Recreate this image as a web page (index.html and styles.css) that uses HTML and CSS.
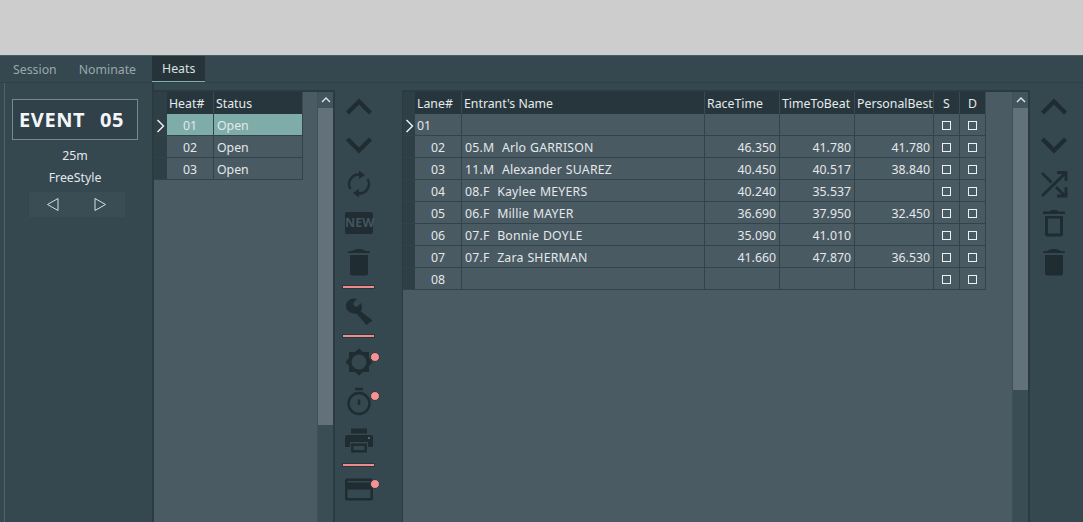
FILE: index.html
```html
<!DOCTYPE html>
<html lang="en">
<head>
    <meta charset="UTF-8">
    <title>Heats</title>
    <link rel="stylesheet" href="styles.css">
</head>
<body>
    <div class="titlebar"></div>
    <div class="window">
        <div class="tabs">
            <div class="tab">Session</div>
            <div class="tab">Nominate</div>
            <div class="tab active">Heats</div>
        </div>
        <div class="content">
            <!-- event selector -->
            <div class="event-panel">
                <div class="event-box"><span>EVENT</span><span>05</span></div>
                <div class="event-line first">25m</div>
                <div class="event-line">FreeStyle</div>
                <div class="event-nav">
                    <svg width="13" height="15" viewBox="0 0 13 15"><path d="M12 1.5v12L1.5 7.5z" class="tri"/></svg>
                    <svg width="13" height="15" viewBox="0 0 13 15"><path d="M1 1.5v12L11.5 7.5z" class="tri"/></svg>
                </div>
            </div>

            <!-- heats grid -->
            <div class="heat-panel">
                <div class="grid-area">
                    <table class="grid heat-grid">
                        <tr><th class="gutter"></th><th class="w-heat">Heat#</th><th class="w-status">Status</th></tr>
                        <tr class="selected"><td class="gutter"><svg class="mark" width="9" height="14" viewBox="0 0 9 14"><path d="M1.5 1l6 6-6 6"/></svg></td><td class="center">01</td><td>Open</td></tr>
                        <tr><td class="gutter"></td><td class="center">02</td><td>Open</td></tr>
                        <tr><td class="gutter"></td><td class="center">03</td><td>Open</td></tr>
                    </table>
                </div>
                <div class="scrollbar heat-scroll">
                    <div class="scroll-up"><svg width="10" height="6" viewBox="0 0 10 6"><path d="M1 5l4-4 4 4"/></svg></div>
                    <div class="scroll-thumb"></div>
                </div>
            </div>

            <!-- heat tools -->
            <div class="toolbar">
                <div class="slot"><svg width="30" height="30" viewBox="0 0 30 30"><path class="line" d="M3.5 22L15 10.5 26.5 22"/></svg></div>
                <div class="slot"><svg width="30" height="30" viewBox="0 0 30 30"><path class="line" d="M3.5 9L15 20.5 26.5 9"/></svg></div>
                <div class="slot faded"><svg width="30" height="30" viewBox="0 0 30 30"><path class="thin" d="M6.5 20a9.6 9.6 0 0 1 9-14.5M23.5 10a9.6 9.6 0 0 1-9 14.5"/><path class="fill" d="M15 1.5l6 4.5-6 4zM15 28.5l-6-4.5 6-4z"/></svg></div>
                <div class="slot faded"><div class="new-ico">NEW</div></div>
                <div class="slot"><svg width="30" height="30" viewBox="0 0 30 30"><path class="fill" d="M4 4.5q5-.5 6-1.5q5-2 10 0q1 1 6 1.5v1.5H4zM6 8h18v18q0 2.5-2.5 2.5h-13Q6 28.5 6 26z"/></svg></div>
                <div class="divider"></div>
                <div class="slot short"><svg width="30" height="30" viewBox="0 0 30 30"><path class="fill" d="M2 9C2 5 5 2 10 1.5L13 2 9 6l1 3 3 1 4-4 1 4c0 1.5-.5 3-1.5 4l12 9.500-6 4.500-10-11.500C8 17.500 2 14 2 9z"/></svg></div>
                <div class="divider"></div>
                <div class="slot">
                    <svg width="30" height="30" viewBox="0 0 30 30"><path class="fill" fill-rule="evenodd" d="M15 1.5l4 3.5h6v6l3.5 4-3.5 4v6h-6l-4 3.5-4-3.5H5v-6l-3.5-4L5 11V5h6zM15 7.5a7.5 7.5 0 1 0 0 15 7.5 7.5 0 0 0 0-15z"/></svg>
                    <span class="dot"></span>
                </div>
                <div class="slot">
                    <svg width="30" height="30" viewBox="0 0 30 30"><circle class="thin" cx="15" cy="17.5" r="10.5"/><path class="thin" d="M11 3h8M15 13.5v5.5"/></svg>
                    <span class="dot"></span>
                </div>
                <div class="slot"><svg width="30" height="30" viewBox="0 0 30 30"><path class="fill" fill-rule="evenodd" d="M7 3.5h16v5H7zM3 10h24q2 0 2 2v10h-5v-5H6v5H1V12q0-2 2-2zM7 18.5h16v9H7zm2.5 2.5v4h11v-4z"/><path class="light" d="M24 12h2v2h-2z"/></svg></div>
                <div class="divider"></div>
                <div class="slot short">
                    <svg width="30" height="30" viewBox="0 0 30 30"><path class="fill" fill-rule="evenodd" d="M3 3.5h24q2 0 2 2v18q0 2-2 2H3q-2 0-2-2v-18q0-2 2-2zm.5 2.5v1.500h23V6zm0 8.500V23h23v-8.500z"/></svg>
                    <span class="dot card-dot"></span>
                </div>
            </div>

            <!-- lanes grid -->
            <div class="lane-panel">
                <div class="grid-area">
                    <table class="grid lane-grid">
                        <tr>
                            <th class="gutter"></th>
                            <th class="w-lane">Lane#</th>
                            <th class="w-name">Entrant's Name</th>
                            <th class="w-time">RaceTime</th>
                            <th class="w-time">TimeToBeat</th>
                            <th class="w-best">PersonalBest</th>
                            <th class="w-check center">S</th>
                            <th class="w-check center">D</th>
                        </tr>
                        <tr>
                            <td class="gutter"><svg class="mark" width="9" height="14" viewBox="0 0 9 14"><path d="M1.5 1l6 6-6 6"/></svg></td>
                            <td class="tight">01</td><td></td><td></td><td></td><td></td>
                            <td class="center"><span class="check"></span></td><td class="center"><span class="check"></span></td>
                        </tr>
                        <tr>
                            <td class="gutter"></td><td class="center">02</td><td class="name">05.M&nbsp; Arlo GARRISON</td>
                            <td class="num">46.350</td><td class="num">41.780</td><td class="num">41.780</td>
                            <td class="center"><span class="check"></span></td><td class="center"><span class="check"></span></td>
                        </tr>
                        <tr>
                            <td class="gutter"></td><td class="center">03</td><td class="name">11.M&nbsp; Alexander SUAREZ</td>
                            <td class="num">40.450</td><td class="num">40.517</td><td class="num">38.840</td>
                            <td class="center"><span class="check"></span></td><td class="center"><span class="check"></span></td>
                        </tr>
                        <tr>
                            <td class="gutter"></td><td class="center">04</td><td class="name">08.F&nbsp; Kaylee MEYERS</td>
                            <td class="num">40.240</td><td class="num">35.537</td><td class="num"></td>
                            <td class="center"><span class="check"></span></td><td class="center"><span class="check"></span></td>
                        </tr>
                        <tr>
                            <td class="gutter"></td><td class="center">05</td><td class="name">06.F&nbsp; Millie MAYER</td>
                            <td class="num">36.690</td><td class="num">37.950</td><td class="num">32.450</td>
                            <td class="center"><span class="check"></span></td><td class="center"><span class="check"></span></td>
                        </tr>
                        <tr>
                            <td class="gutter"></td><td class="center">06</td><td class="name">07.F&nbsp; Bonnie DOYLE</td>
                            <td class="num">35.090</td><td class="num">41.010</td><td class="num"></td>
                            <td class="center"><span class="check"></span></td><td class="center"><span class="check"></span></td>
                        </tr>
                        <tr>
                            <td class="gutter"></td><td class="center">07</td><td class="name">07.F&nbsp; Zara SHERMAN</td>
                            <td class="num">41.660</td><td class="num">47.870</td><td class="num">36.530</td>
                            <td class="center"><span class="check"></span></td><td class="center"><span class="check"></span></td>
                        </tr>
                        <tr>
                            <td class="gutter"></td><td class="center">08</td><td></td><td></td><td></td><td></td>
                            <td class="center"><span class="check"></span></td><td class="center"><span class="check"></span></td>
                        </tr>
                    </table>
                </div>
                <div class="scrollbar lane-scroll">
                    <div class="scroll-up"><svg width="10" height="6" viewBox="0 0 10 6"><path d="M1 5l4-4 4 4"/></svg></div>
                    <div class="scroll-thumb"></div>
                </div>
            </div>

            <!-- lane tools -->
            <div class="toolbar right">
                <div class="slot"><svg width="30" height="30" viewBox="0 0 30 30"><path class="line" d="M3.5 22L15 10.5 26.5 22"/></svg></div>
                <div class="slot"><svg width="30" height="30" viewBox="0 0 30 30"><path class="line" d="M3.5 9L15 20.5 26.5 9"/></svg></div>
                <div class="slot"><svg width="30" height="30" viewBox="0 0 30 30"><path class="thin wide" d="M3 4l9.5 9.5M17 18l9 9M3 27L27 3.5M18 3.5h9v8.5M27 18v9h-9"/></svg></div>
                <div class="slot"><svg width="30" height="30" viewBox="0 0 30 30"><path class="fill" fill-rule="evenodd" d="M4 3.5h7l1-1.5h6l1 1.5h7V6H4zM6 8h18v18q0 2.5-2.5 2.5h-13Q6 28.5 6 26zm3 2.5V25.5h12V10.5z"/></svg></div>
                <div class="slot"><svg width="30" height="30" viewBox="0 0 30 30"><path class="fill" d="M4 4.5q5-.5 6-1.5q5-2 10 0q1 1 6 1.5v1.5H4zM6 8h18v18q0 2.5-2.5 2.5h-13Q6 28.5 6 26z"/></svg></div>
            </div>
        </div>
    </div>
</body>
</html>
```

FILE: styles.css
```css
* {
    margin: 0;
    padding: 0;
    box-sizing: border-box;
}

html, body {
    height: 100%;
    overflow: hidden;
}

body {
    display: flex;
    flex-direction: column;
    background-color: #cdcdcd;
    font-family: "Noto Sans", sans-serif;
    font-size: 13px;
    color: #e4e8ea;
}

.titlebar {
    height: 55px;
    flex: none;
}

.window {
    flex: 1;
    display: flex;
    flex-direction: column;
    min-height: 0;
    background-color: #35474f;
    border-top: 1px solid #4a5b63;
}

/* tabs */
.tabs {
    display: flex;
    height: 27px;
    flex: none;
    padding-left: 4px;
    border-bottom: 1px solid #2f4048;
    background-color: #35474f;
}

.tab {
    padding: 0 9px;
    margin-right: 4px;
    line-height: 27px;
    font-size: 12.3px;
    color: #9aa7ad;
}

.tab.active {
    background-color: #263439;
    color: #d9e0e3;
    height: 26px;
    line-height: 25px;
    padding: 0 10px;
    margin-left: 3px;
    border-bottom: 1px solid #7fb0ab;
}

.content {
    flex: 1;
    display: flex;
    min-height: 0;
    padding-left: 4px;
    background: linear-gradient(to right, #35474f 4px, #4f626a 4px, #4f626a 5px, transparent 5px);
}

/* event panel */
.event-panel {
    width: 150px;
    flex: none;
    padding: 16px 0 0 8px;
    border-right: 2px solid #2b3b42;
}

.event-box {
    display: flex;
    justify-content: space-between;
    width: 126px;
    height: 41px;
    padding: 0 13px 0 6px;
    border: 1px solid #7a888e;
    background-color: #30414a;
    line-height: 40px;
    font-size: 20px;
    font-weight: 700;
    color: #f4f6f7;
    letter-spacing: 0.6px;
}

.event-line {
    width: 126px;
    height: 22px;
    line-height: 22px;
    text-align: center;
    font-size: 12.3px;
}

.event-line.first {
    margin-top: 5px;
}

.event-nav {
    display: flex;
    gap: 35px;
    align-items: center;
    width: 96px;
    height: 25px;
    margin: 3px 0 0 17px;
    padding-left: 17px;
    background-color: #3a4c54;
}

.tri {
    fill: none;
    stroke: #d7dee1;
    stroke-width: 1;
}

/* grids */
.heat-panel,
.lane-panel {
    flex: none;
    display: flex;
    margin-top: 7px;
    background-color: #4b5b64;
    border-top: 2px solid #2b3b42;
    border-right: 2px solid #2b3b42;
}

.heat-panel {
    width: 181px;
}

.lane-panel {
    width: 628px;
    border-left: 1px solid #2b3b42;
}

.grid-area {
    flex: 1;
    min-width: 0;
}

.grid {
    border-collapse: separate;
    border-spacing: 0;
    table-layout: fixed;
}

.heat-grid {
    width: 149px;
}

.lane-grid {
    width: 583px;
}

.grid th {
    height: 22px;
    padding: 0 0 0 2px;
    text-align: left;
    font-weight: 400;
    font-size: 12.3px;
    color: #e6eaec;
    background-color: #27363c;
    border-right: 1px solid #3a4a52;
    white-space: nowrap;
}

.grid td {
    height: 22px;
    padding: 1px 3px 0;
    font-size: 12.3px;
    background-color: #4a5a63;
    border-right: 1px solid #33434b;
    border-bottom: 1px solid #33434b;
    white-space: nowrap;
}

.grid .gutter {
    width: 13px;
    padding: 0;
    background-color: #2f3f46;
    border-right: none;
    text-align: center;
}

.lane-grid .gutter {
    width: 12px;
}

.grid .center {
    text-align: center;
}

.grid .num {
    text-align: right;
}

.grid .tight {
    padding-left: 2px;
}

.grid .name {
    letter-spacing: 0.2px;
    word-spacing: 0.4px;
}

.mark {
    display: block;
    margin: 2px 0 0 2px;
    fill: none;
    stroke: #f2f4f5;
    stroke-width: 1.4;
}

.selected td {
    background-color: #7eaca8;
}

.selected td.gutter {
    background-color: #2f3f46;
}

.w-heat { width: 47px; }
.w-status { width: 89px; }
.w-lane { width: 47px; }
.w-name { width: 243px; }
.w-time { width: 75px; }
.w-best { width: 79px; }
.w-check { width: 26px; }

.grid th.center {
    padding: 0;
}

.check {
    display: block;
    width: 9px;
    height: 9px;
    margin: 0 auto;
    border: 1px solid #eef1f2;
}

/* scrollbars */
.scrollbar {
    width: 16px;
    flex: none;
    background-color: #3a4c54;
    border-left: 1px solid #3f5059;
}

.scroll-up {
    height: 16px;
    display: flex;
    align-items: center;
    justify-content: center;
    background-color: #42545c;
}

.scroll-up path {
    fill: none;
    stroke: #dfe5e8;
    stroke-width: 1.4;
}

.scroll-thumb {
    background-color: #63727a;
}

.heat-scroll .scroll-thumb {
    height: 317px;
}

.lane-scroll .scroll-thumb {
    height: 282px;
}

/* toolbars */
.toolbar {
    width: 67px;
    flex: none;
    display: flex;
    flex-direction: column;
    align-items: flex-start;
    padding: 3px 0 0 9px;
}

.toolbar.right {
    width: 53px;
}

.slot {
    position: relative;
    width: 30px;
    height: 39px;
    flex: none;
    display: flex;
    align-items: center;
    justify-content: center;
}

.slot.short {
    height: 37px;
}

.line {
    fill: none;
    stroke: #1f2c32;
    stroke-width: 4.2;
}

.thin {
    fill: none;
    stroke: #1f2c32;
    stroke-width: 2.4;
}

.thin.wide {
    stroke-width: 2.8;
}

.fill {
    fill: #1f2c32;
}

.light {
    fill: #52636b;
}

.faded {
    opacity: 0.95;
}

.new-ico {
    width: 28px;
    height: 22px;
    border-radius: 2px;
    background-color: #1f2c32;
    color: #45555d;
    font-size: 12.5px;
    font-weight: 700;
    line-height: 22px;
    text-align: center;
}

.divider {
    width: 33px;
    height: 4px;
    margin: 4px 0 4px -2px;
    background-color: #f08a8a;
    border: 1px solid #2a383e;
}

.dot {
    position: absolute;
    top: 10px;
    left: 26px;
    width: 10px;
    height: 10px;
    border-radius: 50%;
    background-color: #f79292;
    border: 1px solid #2a383e;
}

.card-dot {
    top: 8px;
}
```
